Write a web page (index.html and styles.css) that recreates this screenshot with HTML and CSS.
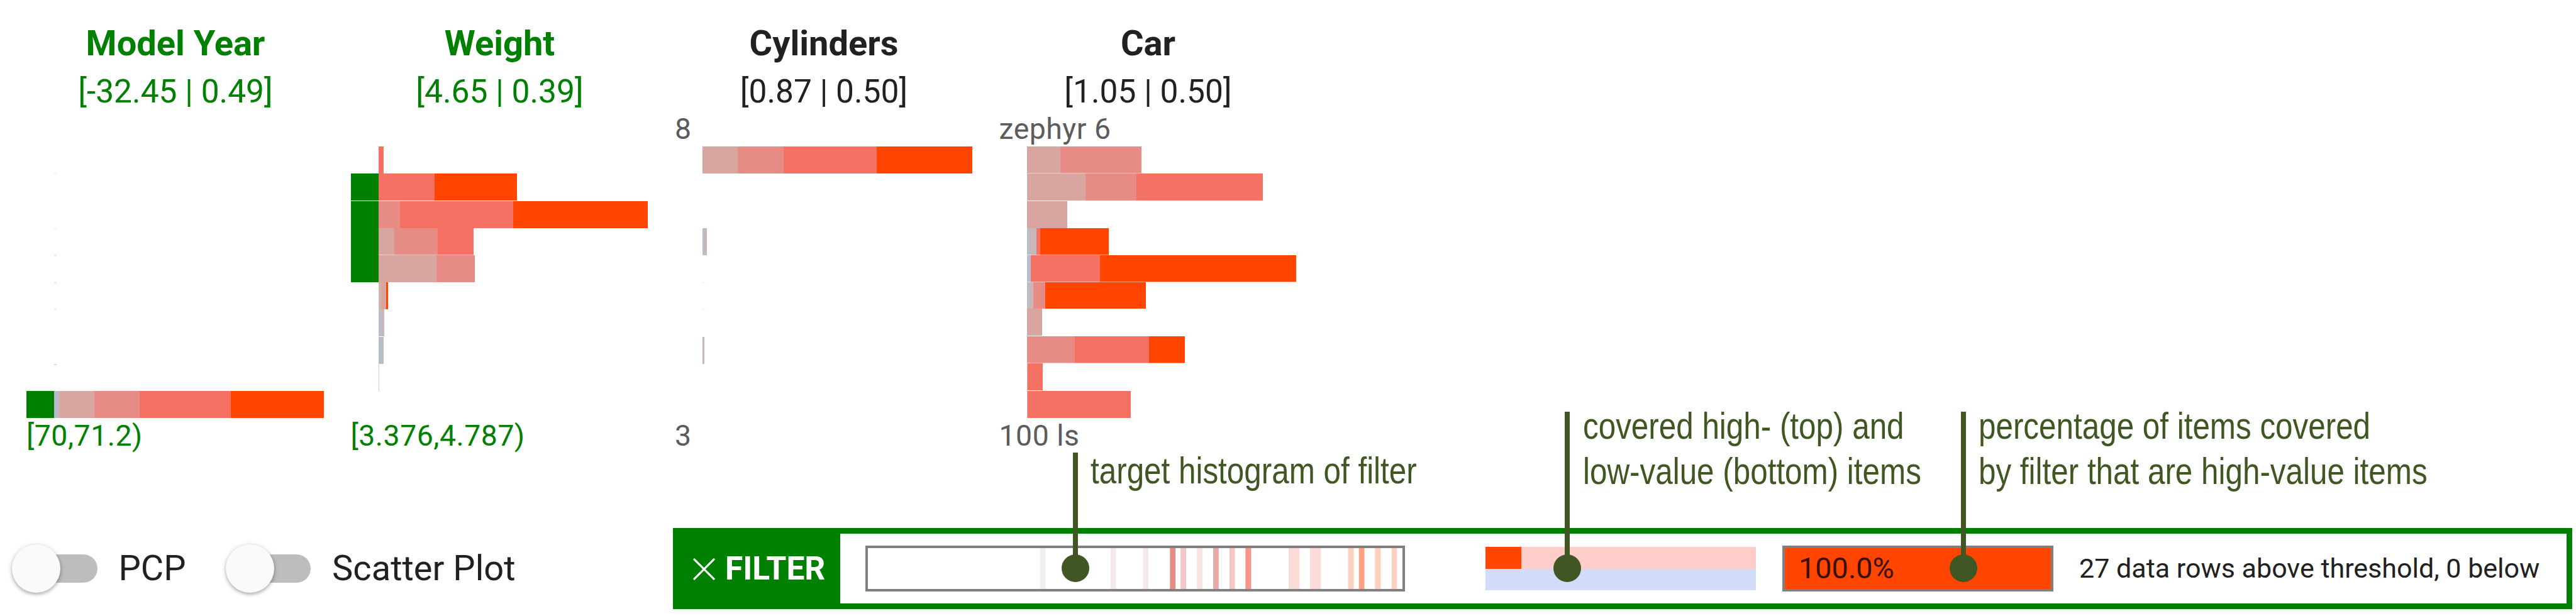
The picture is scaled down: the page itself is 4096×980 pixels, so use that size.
FILE: index.html
```html
<!DOCTYPE html>
<html lang="en">
<head>
<meta charset="UTF-8">
<meta name="viewport" content="width=device-width, initial-scale=1.0">
<title>Histogram Filter</title>
<link rel="stylesheet" href="styles.css">
</head>
<body>

<div class="histograms">
    <div class="histogram selected">
        <h3>Model Year</h3>
        <div class="score">[-32.45 | 0.49]</div>
        <div class="label top"></div>
        <div class="bars">
            <div class="bar"></div>
            <div class="bar"><i class="tick"></i></div>
            <div class="bar"></div>
            <div class="bar"><i class="tick"></i></div>
            <div class="bar"><i class="tick red"></i></div>
            <div class="bar"><i class="tick red"></i></div>
            <div class="bar"><i class="tick red"></i></div>
            <div class="bar"></div>
            <div class="bar"><i class="tick low red"></i></div>
            <div class="bar active"><span class="c0" style="width: 6px"></span><span class="c1" style="width: 3px"></span><span class="c2" style="width: 55px"></span><span class="c3" style="width: 72px"></span><span class="c4" style="width: 145px"></span><span class="c5" style="width: 148px"></span></div>
        </div>
        <div class="label">[70,71.2)</div>
    </div>

    <div class="histogram selected">
        <h3>Weight</h3>
        <div class="score">[4.65 | 0.39]</div>
        <div class="label top"></div>
        <div class="bars">
            <div class="bar"><span class="c4" style="width: 8.4px"></span></div>
            <div class="bar active gap"><span class="c4" style="width: 89.5px"></span><span class="c5" style="width: 131.4px"></span></div>
            <div class="bar active"><span class="c3" style="width: 34.5px"></span><span class="c4" style="width: 180.3px"></span><span class="c5" style="width: 214.2px"></span></div>
            <div class="bar active line"><span class="c2" style="width: 25.1px"></span><span class="c3" style="width: 69px"></span><span class="c4" style="width: 57px"></span></div>
            <div class="bar active"><span class="c2" style="width: 92.5px"></span><span class="c3" style="width: 60.7px"></span></div>
            <div class="bar"><span class="c1" style="width: 3.4px"></span><span class="c2" style="width: 8.7px"></span><span class="c5" style="width: 3px"></span></div>
            <div class="bar gap"><span class="c0" style="width: 4.7px"></span><span class="c1" style="width: 5px"></span></div>
            <div class="bar"><span class="c0" style="width: 8.7px"></span></div>
            <div class="bar"><span class="c1 faint" style="width: 1.7px"></span></div>
            <div class="bar"></div>
        </div>
        <div class="label">[3.376,4.787)</div>
    </div>

    <div class="histogram">
        <h3>Cylinders</h3>
        <div class="score">[0.87 | 0.50]</div>
        <div class="label top">8</div>
        <div class="bars">
            <div class="bar"><span class="c2" style="width: 55.6px"></span><span class="c3" style="width: 73.7px"></span><span class="c4" style="width: 147.8px"></span><span class="c5" style="width: 151.9px"></span></div>
            <div class="bar"></div>
            <div class="bar"></div>
            <div class="bar"><span class="c0" style="width: 4.4px"></span><span class="c1" style="width: 2.3px"></span></div>
            <div class="bar"></div>
            <div class="bar"><i class="tick"></i></div>
            <div class="bar"><i class="tick"></i></div>
            <div class="bar"><span class="c0" style="width: 1px"></span><span class="c1" style="width: 1.7px"></span></div>
            <div class="bar"></div>
            <div class="bar"></div>
        </div>
        <div class="label">3</div>
    </div>

    <div class="histogram">
        <h3>Car</h3>
        <div class="score">[1.05 | 0.50]</div>
        <div class="label top">zephyr 6</div>
        <div class="bars">
            <div class="bar line"><span class="c2" style="width: 53px"></span><span class="c3" style="width: 129px"></span></div>
            <div class="bar gap"><span class="c0" style="width: 1.7px"></span><span class="c2" style="width: 91.5px"></span><span class="c3" style="width: 81.1px"></span><span class="c4" style="width: 201.1px"></span></div>
            <div class="bar"><span class="c2" style="width: 64px"></span></div>
            <div class="bar line"><span class="c0" style="width: 5.7px"></span><span class="c1" style="width: 9.4px"></span><span class="c4" style="width: 6.4px"></span><span class="c5" style="width: 109.3px"></span></div>
            <div class="bar line"><span class="c0" style="width: 6.4px"></span><span class="c4" style="width: 110px"></span><span class="c5" style="width: 312px"></span></div>
            <div class="bar"><span class="c0" style="width: 4.7px"></span><span class="c1" style="width: 5.7px"></span><span class="c3" style="width: 19.1px"></span><span class="c5" style="width: 160.2px"></span></div>
            <div class="bar gap"><span class="c2" style="width: 24.8px"></span></div>
            <div class="bar line"><span class="c3" style="width: 76.8px"></span><span class="c4" style="width: 117.7px"></span><span class="c5" style="width: 56.7px"></span></div>
            <div class="bar gap"><span class="c1" style="width: 1.7px"></span><span class="c4" style="width: 23.8px"></span></div>
            <div class="bar"><span class="c1" style="width: 1px"></span><span class="c4" style="width: 164.3px"></span></div>
        </div>
        <div class="label">100 ls</div>
    </div>
</div>

<div class="controls">
    <div class="toggles">
        <label class="toggle"><span class="track"><span class="knob"></span></span>PCP</label>
        <label class="toggle"><span class="track"><span class="knob"></span></span>Scatter Plot</label>
    </div>

    <div class="filter">
        <div class="filter-button">
            <svg class="close" viewBox="0 0 34 34"><path d="M1 1L33 33M33 1L1 33"/></svg>
            <span>FILTER</span>
        </div>
        <div class="target">
            <svg class="stripes" viewBox="0 0 850 64" preserveAspectRatio="none">
                <rect x="273.8" width="8.6" height="64" fill="#f3eeee"/>
                <rect x="386" width="8.6" height="64" fill="#f7e9e9"/>
                <rect x="437.5" width="8.6" height="64" fill="#f6e8e8"/>
                <rect x="480.3" width="8.8" height="64" fill="#e68c84"/>
                <rect x="497.2" width="8.8" height="64" fill="#f4c8c6"/>
                <rect x="523.2" width="8.8" height="64" fill="#f8e3e1"/>
                <rect x="549" width="8.8" height="64" fill="#eba9a4"/>
                <rect x="574.8" width="8.8" height="64" fill="#f4c7c5"/>
                <rect x="600.4" width="9" height="64" fill="#f6968a"/>
                <rect x="669" width="17.4" height="64" fill="#fadbd8"/>
                <rect x="703" width="17.4" height="64" fill="#fadbd8"/>
                <rect x="763.6" width="9" height="64" fill="#ffd0bf"/>
                <rect x="780.7" width="8.8" height="64" fill="#ffa27e"/>
                <rect x="806.3" width="9" height="64" fill="#ffd0bf"/>
                <rect x="832.7" width="8.6" height="64" fill="#ffd0bf"/>
            </svg>
        </div>
        <div class="coverage">
            <div class="high"><span style="width: 57px"></span></div>
            <div class="low"></div>
        </div>
        <div class="percent">100.0%</div>
        <div class="summary">27 data rows above threshold, 0 below</div>
    </div>
</div>

<!-- callouts over the filter bar -->
<div class="callout target-callout"><p>target histogram of filter</p></div>
<div class="callout coverage-callout"><p>covered high- (top) and<br>low-value (bottom) items</p></div>
<div class="callout percent-callout"><p>percentage of items covered<br>by filter that are high-value items</p></div>

</body>
</html>
```
FILE: styles.css
```css
* {
    box-sizing: border-box;
}

body {
    margin: 0;
    width: 4096px;
    height: 980px;
    position: relative;
    overflow: hidden;
    background-color: #fff;
    color: #212121;
    font-family: Roboto, "Liberation Sans", sans-serif;
}

.histograms {
    display: flex;
    gap: 41.5px;
    height: 839.7px;
    padding: 30.2px 0 0 42px;
}

.histogram {
    width: 474px;
    flex: none;
}

.histogram h3 {
    margin: 0;
    font-size: 56px;
    line-height: 78px;
    font-weight: 700;
    text-align: center;
}

.score {
    font-size: 51.5px;
    line-height: 76px;
    text-align: center;
}

.label {
    font-size: 46.4px;
    line-height: 56.8px;
    letter-spacing: 0.5px;
    color: #5c5c5c;
}

.label.top {
    height: 49px;
    line-height: 42px;
}

.selected,
.selected .label {
    color: #008000;
}

.bars {
    height: 431.8px;
    display: flex;
    flex-direction: column;
}

.bar {
    flex: 1;
    display: flex;
    padding-left: 44px;
}

.bar.active {
    padding-left: 0;
}

.bar.active::before {
    content: "";
    width: 44px;
    background-color: #008000;
}

.bar.gap {
    border-bottom: 1px solid #fff;
}

.bar.line span {
    border-bottom: 1px solid rgba(255, 255, 255, 0.5);
}

.c0 { background-color: #b8bec9; }
.c1 { background-color: #cab6b6; }
.c2 { background-color: #d8a5a0; }
.c3 { background-color: #e68c84; }
.c4 { background-color: #f47163; }
.c5 { background-color: #ff4500; }

.faint {
    opacity: 0.7;
}

.tick {
    width: 4px;
    height: 1px;
    background-color: #e6e6e6;
}

.tick.red {
    background-color: #f4d2d2;
}

.tick.low {
    height: 2px;
}

.controls {
    display: flex;
    height: 129px;
    padding-right: 6.4px;
}

.toggles {
    width: 1070px;
    display: flex;
    align-items: center;
    gap: 46px;
    padding-left: 38px;
    font-size: 56px;
}

.toggle {
    display: flex;
    align-items: center;
    gap: 34px;
    height: 76px;
}

.toggle + .toggle {
    margin-left: 36px;
}

.track {
    width: 116.5px;
    height: 45px;
    border-radius: 23px;
    background-color: #bdbdbd;
    display: flex;
    align-items: center;
}

.knob {
    width: 77px;
    height: 77px;
    flex: none;
    margin-left: -19px;
    border-radius: 50%;
    background-color: #fafafa;
    box-shadow: 0 3px 5px rgba(0, 0, 0, 0.22), 0 1px 8px rgba(0, 0, 0, 0.16);
}

.filter {
    flex: 1;
    display: flex;
    align-items: center;
    border: 9px solid #008000;
}

.filter-button {
    width: 257px;
    height: 111px;
    display: flex;
    align-items: center;
    padding-left: 23px;
    background-color: #008000;
    color: #fff;
    font-size: 51.5px;
    font-weight: 700;
}

.close {
    width: 35px;
    height: 35px;
    margin: 3px 16px 0 0;
    fill: none;
    stroke: #fff;
    stroke-width: 3;
}

.target {
    width: 858px;
    height: 73px;
    margin: 1px 0 0 40px;
    border: 4px solid #808080;
}

.stripes {
    display: block;
    width: 850px;
    height: 65px;
}

.coverage {
    width: 430px;
    height: 69px;
    margin: 1px 0 0 128px;
    display: flex;
    flex-direction: column;
}

.coverage div {
    flex: 1;
    display: flex;
}

.high {
    background-color: #ffcdc9;
}

.high span {
    background-color: #ff4500;
}

.low {
    background-color: #d2dbf8;
}

.percent {
    width: 431px;
    height: 73px;
    margin: 1px 0 0 42px;
    padding-left: 22px;
    border: 4px solid #808080;
    background-color: #ff4500;
    color: #380f00;
    font-size: 46.8px;
    line-height: 65px;
}

.summary {
    margin-left: 41px;
    font-size: 43px;
    white-space: nowrap;
}

.callout {
    position: absolute;
    border-left: 8px solid #405623;
    color: #405623;
}

.callout::after {
    content: "";
    position: absolute;
    left: -26px;
    bottom: -22px;
    width: 44px;
    height: 44px;
    border-radius: 50%;
    background-color: #405623;
}

.callout p {
    margin: 0 0 0 20.5px;
    font-family: "Liberation Sans", Arial, sans-serif;
    font-size: 60px;
    line-height: 72.4px;
    white-space: nowrap;
    transform: scaleX(0.823);
    transform-origin: left;
}

.target-callout {
    left: 1705.5px;
    top: 720px;
    height: 183.5px;
}

.target-callout p {
    margin-top: -7px;
}

.coverage-callout {
    left: 2488px;
    top: 654.5px;
    height: 249px;
}

.percent-callout {
    left: 3117.5px;
    top: 654.5px;
    height: 249px;
}

.coverage-callout p,
.percent-callout p {
    margin-top: -12.5px;
}
```
